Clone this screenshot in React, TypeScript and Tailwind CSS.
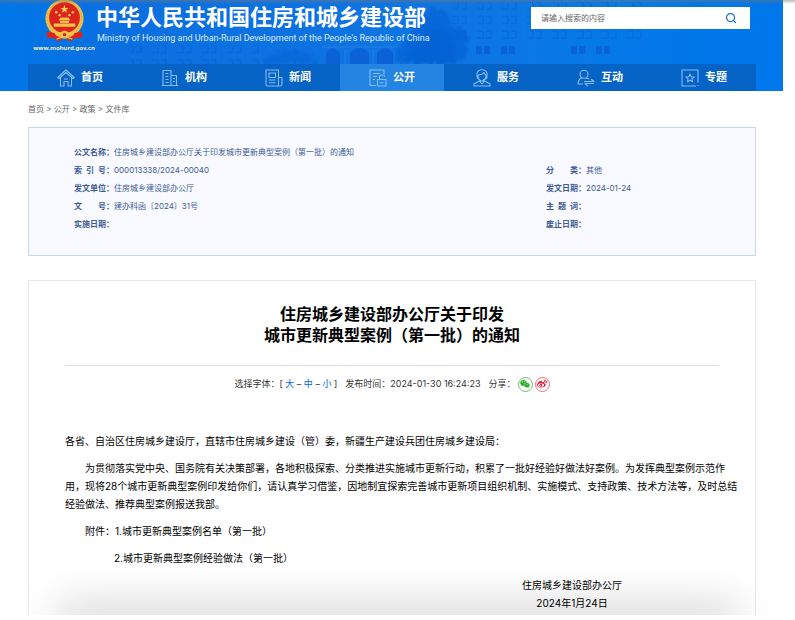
import type { ReactNode } from 'react';
import { Search } from 'lucide-react';
import { FaWeixin, FaWeibo } from 'react-icons/fa';

const Emblem = () => (
  <svg viewBox="0 0 42 44" className="h-[43px] w-[41px]" aria-hidden="true">
    <path d="M8 30 L3 39 L11 38 L15 43 L21 38 L27 43 L31 38 L39 39 L34 30 Z" fill="#d8261c" />
    <circle cx="21" cy="19" r="19.5" fill="#f3c24c" />
    <circle cx="21" cy="19" r="17.8" fill="none" stroke="#e0a638" strokeWidth="1" strokeDasharray="2 1.5" />
    <circle cx="21" cy="18" r="15.8" fill="#dc241c" />
    <path d="M21 5.2l1.1 2.9h3.1l-2.5 1.9.9 3-2.6-1.8-2.6 1.8.9-3-2.5-1.9h3.1z" fill="#f7cf55" />
    <circle cx="12.5" cy="12.5" r="1.3" fill="#f7cf55" />
    <circle cx="16" cy="15.5" r="1.2" fill="#f7cf55" />
    <circle cx="26" cy="15.5" r="1.2" fill="#f7cf55" />
    <circle cx="29.5" cy="12.5" r="1.3" fill="#f7cf55" />
    <path d="M15 21l2-3h8l2 3zM16.5 21.5h9v2h-9zM10 24h22v3.5H10z" fill="#f3c24c" />
    <path d="M8 30.5c4 3.5 22 3.5 26 0l-2 3.5c-5 3-17 3-22 0z" fill="#f3c24c" />
    <path d="M3 32l8 2 4 8-5-3-7 0zM39 32l-8 2-4 8 5-3 7 0z" fill="#d8261c" />
    <circle cx="21" cy="35.5" r="4" fill="#f3c24c" />
    <circle cx="21" cy="35.5" r="1.8" fill="#dc241c" />
    <path d="M13 40q8-4 16 0" fill="none" stroke="#f3c24c" strokeWidth="1.5" />
  </svg>
);

// Faint drawing of the ministry building and trees behind the header
const Backdrop = () => (
  <svg viewBox="0 0 783 91" preserveAspectRatio="none" className="absolute inset-0 h-full w-full" aria-hidden="true">
    <defs>
      <linearGradient id="sky" x1="0" x2="1" y1="0" y2="0">
        <stop offset="0" stopColor="#0077e8" />
        <stop offset="0.15" stopColor="#0b6fe0" />
        <stop offset="0.55" stopColor="#0f75e2" />
        <stop offset="0.78" stopColor="#0579e8" />
        <stop offset="0.9" stopColor="#0077ea" />
      </linearGradient>
      <pattern id="windows" x="476" y="1" width="25" height="14.5" patternUnits="userSpaceOnUse">
        <path d="M1 1h6v7H1M10 1h5v7h-5" fill="none" stroke="#0861d2" strokeWidth="1.2" opacity="0.65" />
      </pattern>
      <filter id="rough" x="-20%" y="-20%" width="140%" height="140%">
        <feTurbulence type="fractalNoise" baseFrequency="0.3" numOctaves="3" seed="4" />
        <feDisplacementMap in="SourceGraphic" scale="14" xChannelSelector="R" yChannelSelector="G" />
        <feGaussianBlur stdDeviation="0.8" />
      </filter>
    </defs>
    <rect width="783" height="91" fill="url(#sky)" />
    <rect x="130" y="42" width="130" height="22" fill="url(#windows)" />
    <rect x="450" y="2" width="200" height="38" fill="url(#windows)" />
    <g fill="#0a60d4" opacity="0.85">
      <path d="M326 64V53q6-9 14 0v11zM350 64V53q9-10 19 0v11zM377 64V53q8-10 16 0v11z" />
      <path d="M476 46h6v8h-6zM484 46h6v8h-6zM501 46h6v8h-6zM509 46h6v8h-6zM571 46h6v8h-6zM579 46h6v8h-6zM596 46h6v8h-6zM604 46h6v8h-6z" />
    </g>
    <path d="M322 47h82M345 50v14M373 50v14" stroke="#2f8aeb" strokeWidth="1.5" opacity="0.4" />
    <g fill="#0a5ccf" filter="url(#rough)">
      <path d="M402 64C388 54 402 40 414 36C408 24 424 14 434 8C446 8 452 18 450 26C464 26 474 38 466 46C470 56 462 62 454 64Z" opacity="0.55" />
      <path d="M412 64C404 54 412 46 422 44C420 34 432 28 438 30C450 34 458 44 452 52L456 64Z" opacity="0.35" />
      <path d="M262 64C266 54 280 49 292 51C304 48 316 54 318 64Z" opacity="0.4" />
    </g>
  </svg>
);

const NavIcon = ({ children }: { children: ReactNode }) => (
  <svg
    viewBox="0 0 18 18"
    className="size-[18px] shrink-0"
    fill="none"
    stroke="#86bdf4"
    strokeWidth="1.1"
    strokeLinejoin="round"
    aria-hidden="true"
  >
    {children}
  </svg>
);

const navItems = [
  {
    label: '首页',
    icon: <path d="M.8 8.5 9 1l8.2 7.5-1.2 1L9 3.5 2 9.5zM3.5 8.5V17H7v-4.500h4V17h3.500V8.500M7 10h4" />,
  },
  {
    label: '机构',
    icon: <path d="M2 16V1.500h8V16M.8 16.500h16.400M10.500 6.500h5V16M4.500 4.500h3M4.500 7.500h3M4.500 10.500h3M4.500 13.500h3M12 9.500h2M12 12.500h2" />,
  },
  {
    label: '新闻',
    icon: <path d="M1 1h12.500v16H2.500Q1 17 1 15.500zM13.500 8.500H17V15.500Q17 17 15.200 17H12.500M4 4h6.500v4.500H4zM4 11h6.500M4 13.800h6.500" />,
  },
  {
    label: '公开',
    active: true,
    icon: <path d="M7 16.500H1V1h14v4M4 4.500h7M4 7.500h4M4 10.500h2M8.500 10.500h8.500V17H8.500zM10.500 10.500V8.300q0-2.300 2-2.300h1.200q2 0 2 1.800M11 13.800h3.500" />,
  },
  {
    label: '服务',
    icon: <path d="M4 7.500C3 3 5.500.8 9 .8s6 2.200 5 6.700M5 6C8 6 10 5 11 3.500q.8 2 2 2.500c0 4-1.500 6-4 6S5 10 5 6M4 7.500q0 2 1.500 2M14 7.500q0 3-4 3M6.500 12 1 15v2h16v-2l-5.500-3M6.500 12 9 15l2.500-3" />,
  },
  {
    label: '互动',
    icon: <path d="M11 5.200a4 4 0 1 1-8 0 4 4 0 1 1 8 0zM4.500 8.700Q1 11 1 15h5M9 9.200q2 0 3 1M7 12.500h10l-3-2.500M17 14.500H8l3 2.700" />,
  },
  {
    label: '专题',
    icon: <path d="M15 17H1V1h16v12.500M17 16v1M9 5l1.200 2.700 2.900.3-2.200 1.900.7 2.900L9 11.300l-2.600 1.500.7-2.900L4.900 8l2.900-.3z" />,
  },
];

const Field = ({ label, children }: { label: ReactNode; children?: ReactNode }) => (
  <div className="flex h-[18px] items-center">
    <dt className="flex w-10 shrink-0 font-bold">
      <span className="flex w-8 justify-between">{label}</span>：
    </dt>
    <dd>{children}</dd>
  </div>
);

const App = () => {
  return (
    <div className="relative overflow-hidden bg-white font-['Inter','Noto_Sans_CJK_SC',sans-serif] text-black" lang="zh-CN">
      {/* Header */}
      <header className="relative mr-3">
        <Backdrop />
        <div className="relative pr-[27px] pl-7">
          <div className="flex h-16 justify-between">
            <div className="flex">
              <div className="flex w-[68px] flex-col items-center pl-1">
                <Emblem />
                <span className="font-['Noto_Sans',sans-serif] text-[6px] leading-[10px] font-bold text-[#f6edbd]">www.mohurd.gov.cn</span>
              </div>
              <div className="pt-1 text-white">
                <h1 className="text-[22px] leading-[26px] font-bold whitespace-nowrap">中华人民共和国住房和城乡建设部</h1>
                <p className="pl-px font-['Roboto',sans-serif] text-[9px] leading-[16px] whitespace-nowrap text-[#dcecff]">
                  Ministry of Housing and Urban-Rural Development of the People&apos;s Republic of China
                </p>
              </div>
            </div>
            <form className="mt-[7px] mr-[6px] flex h-[22px] w-[219px] items-center bg-white">
              <input
                type="text"
                aria-label="搜索"
                placeholder="请输入搜索的内容"
                className="h-full min-w-0 flex-1 pl-[10px] text-[8px] outline-none placeholder:text-[#666666]"
              />
              <button type="button" aria-label="搜索" className="px-[13px] text-[#1a6fd0]">
                <Search size={12} strokeWidth={2.5} />
              </button>
            </form>
          </div>
          <nav className="flex h-[27px] bg-[#0563c5]">
            {navItems.map((item) => (
              <a
                key={item.label}
                href="#"
                className={
                  item.active
                    ? 'flex flex-1 items-center gap-[6px] bg-[#2484e2] pl-[29px] text-[11px] font-bold text-white'
                    : 'flex flex-1 items-center gap-[6px] pl-[29px] text-[11px] font-bold text-white'
                }
              >
                <NavIcon>{item.icon}</NavIcon>
                {item.label}
              </a>
            ))}
          </nav>
        </div>
      </header>

      <main className="mr-3 pr-[27px] pl-7">
        {/* Breadcrumb */}
        <div className="flex h-9 items-center text-[8px] text-[#666666]">
          <p>
            <a href="#">首页</a> &gt; <a href="#">公开</a> &gt; <a href="#">政策</a> &gt; <a href="#">文件库</a>
          </p>
        </div>

        {/* Document index */}
        <section className="border border-[#c5d9ea] bg-[#f9faff] px-[45px] pt-[15px] pb-[22px] text-[8px] text-[#3d5a96]">
          <dl>
            <Field label="公文名称">住房城乡建设部办公厅关于印发城市更新典型案例（第一批）的通知</Field>
            <div className="grid grid-cols-[472px_1fr]">
              <Field label={<><span>索</span><span>引</span><span>号</span></>}>000013338/2024-00040</Field>
              <Field label={<><span>分</span><span>类</span></>}>其他</Field>
              <Field label="发文单位">住房城乡建设部办公厅</Field>
              <Field label="发文日期">2024-01-24</Field>
              <Field label={<><span>文</span><span>号</span></>}>建办科函〔2024〕31号</Field>
              <Field label={<><span>主</span><span>题</span><span>词</span></>} />
              <Field label="实施日期" />
              <Field label="废止日期" />
            </div>
          </dl>
        </section>

        {/* Article */}
        <article className="mt-6 border border-b-0 border-[#e8e8e8] pt-[23px] pb-[3px]">
          <div className="mx-9 border-b border-[#dcdcdc] pb-[19px]">
            <h2 className="text-center text-[16px] leading-[21px] font-bold">
              住房城乡建设部办公厅关于印发
              <br />
              城市更新典型案例（第一批）的通知
            </h2>
          </div>
          <div className="flex h-9 items-center justify-center gap-2 text-[9px] text-[#333333]">
            <div>
              选择字体：[ <button type="button" className="text-[#0066d6]">大</button> –{' '}
              <button type="button" className="text-[#0066d6]">中</button> –{' '}
              <button type="button" className="text-[#0066d6]">小</button> ]
            </div>
            <div>发布时间：2024-01-30 16:24:23</div>
            <div className="flex items-center gap-[2px]">
              <span>分享：</span>
              <a href="#" aria-label="微信" className="flex size-[15px] items-center justify-center rounded-full border border-[#6cc364] text-[#2fae2b]">
                <FaWeixin size={10} />
              </a>
              <a href="#" aria-label="微博" className="flex size-[15px] items-center justify-center rounded-full border border-[#ee7078] text-[#e6162d]">
                <FaWeibo size={10} />
              </a>
            </div>
          </div>

          <div className="flex flex-col gap-[9px] pt-[30px] pr-4 pl-9 text-[10px] leading-[18px]">
            <p>各省、自治区住房城乡建设厅，直辖市住房城乡建设（管）委，新疆生产建设兵团住房城乡建设局：</p>
            <p className="indent-[20px]">
              为贯彻落实党中央、国务院有关决策部署，各地积极探索、分类推进实施城市更新行动，积累了一批好经验好做法好案例。为发挥典型案例示范作
              <br />
              用，现将28个城市更新典型案例印发给你们，请认真学习借鉴，因地制宜探索完善城市更新项目组织机制、实施模式、支持政策、技术方法等，及时总结经验做法、推荐典型案例报送我部。
            </p>
            <p className="pl-[20px]">附件：1.城市更新典型案例名单（第一批）</p>
            <p className="pl-[49px]">2.城市更新典型案例经验做法（第一批）</p>
            <div className="mr-[117px] self-end text-center">
              <p>住房城乡建设部办公厅</p>
              <p>2024年1月24日</p>
            </div>
          </div>
        </article>
      </main>

      {/* Edge shading */}
      <div className="pointer-events-none absolute inset-x-0 top-0 h-1 bg-linear-to-b from-[#77777780] to-transparent" />
      <div className="pointer-events-none absolute inset-x-16 -bottom-1 h-1 shadow-[0_0_40px_6px_#0000004d]" />
    </div>
  );
};

export default App;
